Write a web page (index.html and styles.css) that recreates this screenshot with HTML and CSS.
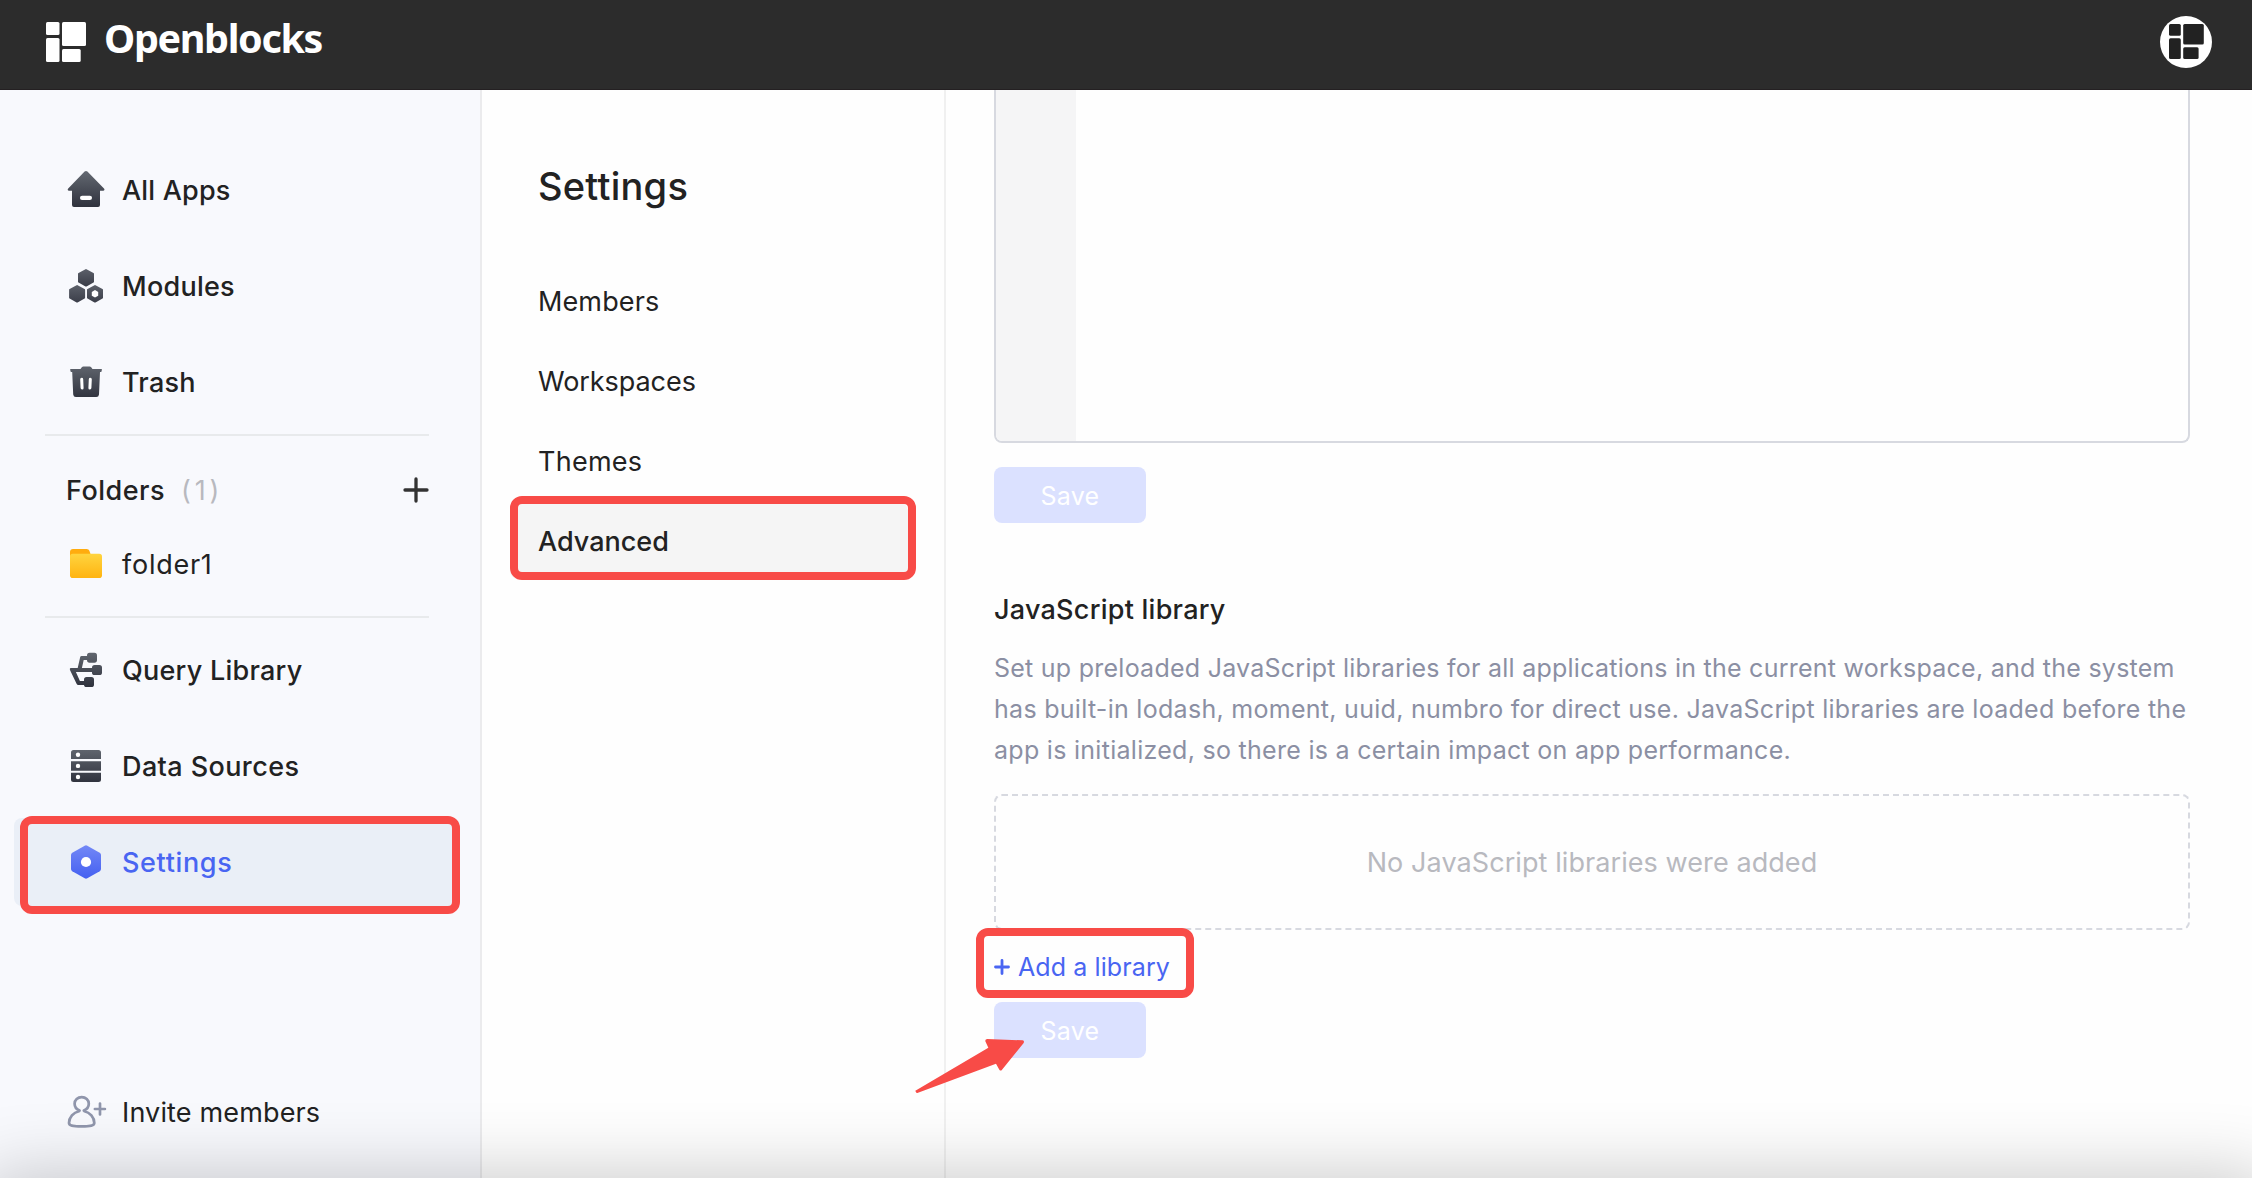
FILE: index.html
```
<!DOCTYPE html>
<html lang="en">
<head>
<meta charset="utf-8">
<title>Openblocks</title>
<link rel="stylesheet" href="styles.css">
</head>
<body>
<svg class="defs" width="0" height="0" aria-hidden="true">
  <defs>
    <linearGradient id="ink" gradientUnits="userSpaceOnUse" x1="0" y1="2" x2="0" y2="37"><stop offset="0" stop-color="#626770"/><stop offset="1" stop-color="#2f323d"/></linearGradient>
    <linearGradient id="inkTop" gradientUnits="userSpaceOnUse" x1="0" y1="3" x2="0" y2="20"><stop offset="0" stop-color="#5c606a"/><stop offset="1" stop-color="#3a3d48"/></linearGradient>
    <linearGradient id="inkLow" gradientUnits="userSpaceOnUse" x1="0" y1="19" x2="0" y2="37"><stop offset="0" stop-color="#5c606a"/><stop offset="1" stop-color="#3a3d48"/></linearGradient>
    <linearGradient id="blue" x1="0" y1="0" x2="0" y2="1"><stop offset="0" stop-color="#7388f6"/><stop offset="1" stop-color="#4460f1"/></linearGradient>
    <linearGradient id="gold" x1="0" y1="0" x2="0" y2="1"><stop offset="0" stop-color="#ffd43f"/><stop offset="1" stop-color="#ffb411"/></linearGradient>
  </defs>
</svg>

<header class="topbar">
  <div class="brand">
    <svg class="brand-mark" viewBox="0 0 40 40" fill="#fff"><rect width="13.5" height="13" rx="1.5"/><rect x="16" width="24" height="24" rx="1.5"/><rect y="16" width="13.5" height="24" rx="1.5"/><rect x="16" y="27" width="18.7" height="13" rx="1.5"/></svg>
    <span class="brand-name">Openblocks</span>
  </div>
  <div class="avatar">
    <svg width="35" height="35" viewBox="0 0 35 35" fill="#222"><rect width="11.8" height="11.8" rx="1.5"/><rect x="14.2" width="20.6" height="20.6" rx="1.5"/><rect y="14.2" width="11.8" height="20.8" rx="1.5"/><rect x="14.2" y="23.2" width="15.4" height="11.8" rx="1.5"/></svg>
  </div>
</header>

<div class="layout">
  <aside class="sidebar">
    <nav class="nav">
      <a class="nav-item apps"><svg class="icon" viewBox="0 0 40 40"><path fill="url(#ink)" d="M18.6 1.6a2 2 0 0 1 2.8 0L38 18.4c.9 1 .5 2.3-.8 2.3H34V35a2 2 0 0 1-2 2H8a2 2 0 0 1-2-2V20.7H3c-1.300 0-1.700-1.300-.8-2.300z"/><rect x="14" y="25.700" width="12" height="4.300" rx="2.100" fill="#fff"/></svg><span>All Apps</span></a>
      <a class="nav-item"><svg class="icon" viewBox="0 0 40 40"><g stroke-width="2" stroke-linejoin="round"><path fill="url(#inkTop)" stroke="url(#inkTop)" d="M20 4l7 3.900v7.800l-7 3.900-7-3.900V7.900z"/><path fill="url(#inkLow)" stroke="url(#inkLow)" d="M11.100 20l7 3.900v7.800l-7 3.900-7-3.900v-7.800zM29 20l7 3.900v7.800l-7 3.900-7-3.900v-7.800z"/></g><path fill="#fff" d="M29 24l3.200 1.900v3.800L29 31.600l-3.200-1.900v-3.800z"/></svg><span>Modules</span></a>
      <a class="nav-item"><svg class="icon" viewBox="0 0 40 40"><path fill="url(#ink)" d="M4.600 7H14.500l1.300-1.700q.6-.7 1.500-.7h6.400q.9 0 1.500.7L26.500 7h8.900q.7 0 .5.800l-.4 1.600q-.2.600-1 .600h-.5L33 32.500Q32.700 35 30.300 35H9.900Q7.500 35 7.200 32.500L6.200 10H5.600q-.8 0-1-.600L4.200 7.800Q4 7 4.600 7z"/><path stroke="#fff" stroke-width="3" stroke-linecap="round" d="M15.700 17.200l.4 8.800M24.300 17.200l-.4 8.800"/></svg><span>Trash</span></a>
    </nav>
    <hr class="divider">
    <div class="folders-head"><span class="folders-title">Folders</span><span class="folders-count">(1)</span>
      <svg class="plus" width="26" height="26" viewBox="0 0 26 26"><path d="M13 2v22M2 13h22" stroke="#333" stroke-width="3.300" stroke-linecap="round"/></svg>
    </div>
    <a class="folder"><svg class="icon" viewBox="0 0 40 40"><path fill="#ffac0f" d="M4 8a3 3 0 0 1 3-3h13.500c1.500 0 2.500.7 3 2l1.500 4.500V16H4z"/><rect x="4" y="9.700" width="32" height="24.300" rx="2.800" fill="url(#gold)"/></svg><span>folder1</span></a>
    <hr class="divider">
    <nav class="nav nav-lower">
      <a class="nav-item"><svg class="icon" viewBox="0 0 40 40"><g fill="url(#ink)"><rect x="21" y="2.700" width="10" height="10" rx="2.600"/><rect x="26" y="15" width="10" height="10" rx="2.600"/><rect x="18" y="27" width="10" height="10" rx="2.600"/><path d="M4.800 18H11.700L14.200 6.900Q14.500 6 15.500 6H22V10H17.700L15.900 18H27V22H9.900L13.900 31H19V35H12.300Q11.200 35 10.700 34L4.200 20.500Q3.200 18 4.800 18z"/></g></svg><span>Query Library</span></a>
      <a class="nav-item data"><svg class="icon" viewBox="0 0 40 40"><path fill="url(#ink)" d="M7.500 4h25A2.500 2.500 0 0 1 35 6.500V13H5V6.500A2.500 2.500 0 0 1 7.500 4zM5 15.300h30v9.400H5zM5 26.800h30v6.700a2.500 2.500 0 0 1-2.500 2.500h-25A2.500 2.500 0 0 1 5 33.500z"/><g fill="#fff"><circle cx="12" cy="8.700" r="2.200"/><circle cx="12" cy="19.900" r="2.200"/><circle cx="12" cy="31" r="2.200"/></g></svg><span>Data Sources</span></a>
      <a class="nav-item active"><svg class="icon" viewBox="0 0 40 40"><path fill="url(#blue)" d="M18.700 3.700q1.300-.7 2.600 0l12.400 7q1.300.8 1.300 2.300v14q0 1.500-1.300 2.300l-12.400 7q-1.300.7-2.600 0l-12.400-7Q5 28.500 5 27V13q0-1.500 1.300-2.300z"/><circle cx="20" cy="20" r="5.100" fill="#fff"/></svg><span>Settings</span></a>
    </nav>
    <a class="invite"><svg class="icon" viewBox="0 0 40 40" fill="none" stroke="#9096ac" stroke-width="2.700" stroke-linecap="round"><path d="M13.600 18.600C10.500 17.400 8.600 14.800 8.600 11.800 8.600 8 11.700 5.200 15.700 5.200s7.100 2.800 7.100 6.600c0 3-1.900 5.600-5 6.800M13 19.200C7.500 20.300 3 25.500 3 31c0 2.500 3.500 3.400 12.600 3.400S28.300 33.500 28.300 31c0-5.500-4.500-10.700-9.900-11.800M34 11.600v10.800M28.900 17h10"/></svg><span>Invite members</span></a>
  </aside>

  <section class="settings">
    <h1>Settings</h1>
    <nav class="settings-nav">
      <a class="members">Members</a>
      <a class="workspaces">Workspaces</a>
      <a class="themes">Themes</a>
      <a class="current">Advanced</a>
    </nav>
  </section>

  <main class="content">
    <div class="code-editor"><div class="gutter"></div></div>
    <button class="save" type="button">Save</button>
    <h2>JavaScript library</h2>
    <p class="desc"><span>Set up preloaded JavaScript libraries for all applications in the current workspace, and the system</span><br><span class="desc-wide">has built-in lodash, moment, uuid, numbro for direct use. JavaScript libraries are loaded before the</span><br><span class="desc-wide">app is initialized, so there is a certain impact on app performance.</span></p>
    <div class="empty">No JavaScript libraries were added</div>
    <a class="add"><svg width="16" height="16" viewBox="0 0 16 16"><path d="M8 1.500v13M1.500 8h13" stroke="#4965f2" stroke-width="2.800" stroke-linecap="round"/></svg><span>Add a library</span></a>
    <button class="save save-library" type="button">Save</button>
  </main>
</div>

<div class="mark mark-sidebar"></div>
<div class="mark mark-advanced"></div>
<div class="mark mark-add"></div>
<svg class="arrow" viewBox="0 0 450 270"><path fill="#f84b47" d="M46 212L265 83 256 64Q255 57 262 57L368 61Q374 63 371 69L306 149Q302 154 298 149L288 131 52 219Q48 220 46 212z"/></svg>
<div class="window-shadow"></div>
</body>
</html>
```
FILE: styles.css
```
* { box-sizing: border-box; }

body {
  margin: 0;
  height: 1178px;
  overflow: hidden;
  position: relative;
  display: flex;
  flex-direction: column;
  background: #fefefe;
  color: #222;
  font: 27px/40px Inter, "Liberation Sans", sans-serif;
  letter-spacing: 0.25px;
}

.defs { position: absolute; }

.topbar {
  flex: none;
  height: 90px;
  padding: 0 40px 6px 46px;
  display: flex;
  align-items: center;
  justify-content: space-between;
  background: #2c2c2c;
  border-bottom: 1px solid #242022;
}

.brand { display: flex; align-items: center; gap: 18px; }
.brand-mark { width: 40px; height: 40px; }
.brand-name {
  margin-top: -7px;
  color: #fff;
  font: 700 39.5px/40px "Noto Sans", sans-serif;
  letter-spacing: -1.35px;
}

.avatar {
  width: 52px;
  height: 52px;
  display: grid;
  place-items: center;
  border-radius: 50%;
  background: #fff;
}

.layout { flex: 1; display: flex; min-height: 0; }

.sidebar {
  width: 482px;
  display: flex;
  flex-direction: column;
  padding: 56px 20px 0 14px;
  background: #f8f9fd;
  border-right: 2px solid #ebebed;
}

.nav { display: flex; flex-direction: column; gap: 8px; }
.nav-lower { margin-top: 8px; }

.nav-item, .folder, .invite {
  height: 88px;
  display: flex;
  align-items: center;
  gap: 16px;
  padding-left: 52px;
  border-radius: 8px;
  font-weight: 500;
}
.icon { flex: none; width: 40px; height: 40px; overflow: visible; }
.sidebar span { padding-top: 2px; }

.apps { letter-spacing: 0.2px; }
.data { letter-spacing: 0.4px; }
.active { background: #eaeff7; color: #4965f2; letter-spacing: 0.65px; }

.folder { height: 76px; font-weight: 400; letter-spacing: 0.75px; }
.invite { margin-top: 162px; font-weight: 400; letter-spacing: 0.15px; }

.divider {
  width: 384px;
  height: 2px;
  margin: 8px 0 0 31px;
  border: 0;
  background: #e8eaec;
}
.folder + .divider { margin-top: 14px; }

.folders-head {
  height: 72px;
  margin-top: 18px;
  padding: 0 31px 0 52px;
  display: flex;
  align-items: center;
}
.folders-title { font-weight: 500; letter-spacing: 0.5px; }
.folders-count { margin-left: 16px; color: #b8b9bf; letter-spacing: 3.8px; }
.plus { margin-left: auto; }

.settings {
  width: 464px;
  padding: 72px 36px 0 28px;
  border-right: 2px solid #f0f0f0;
}
.settings h1 {
  margin: 0 0 67px 28px;
  font-size: 38px;
  line-height: 48px;
  font-weight: 500;
}
.settings-nav { display: flex; flex-direction: column; gap: 4px; margin-top: -14px; }
.settings-nav a { height: 76px; padding-left: 28px; line-height: 78px; border-radius: 8px; }
.members { letter-spacing: 0.12px; }
.workspaces { letter-spacing: -0.06px; }
.settings-nav .current { background: #f5f5f5; font-weight: 500; letter-spacing: 0; }

.content { width: 1244px; padding-left: 48px; }

.code-editor {
  height: 353px;
  border: 2px solid #d7d9e0;
  border-top: 0;
  border-radius: 0 0 8px 8px;
  overflow: hidden;
}
.gutter { width: 80px; height: 100%; background: #f5f5f6; }

.save {
  display: block;
  width: 152px;
  height: 56px;
  margin: 24px 0 0;
  padding: 2px 0 0;
  border: 0;
  border-radius: 8px;
  background: #dbe1ff;
  color: #fff;
  font: 400 25px/54px Inter, sans-serif;
  letter-spacing: 0.24px;
}

.content h2 { margin: 67px 0 0; font-size: 27px; line-height: 40px; font-weight: 500; }

.desc {
  margin: 18px 0 0;
  color: #8b8fa3;
  font-size: 25px;
  line-height: 41px;
  letter-spacing: 0.25px;
  white-space: nowrap;
}
.desc-wide { letter-spacing: 0.285px; }

.empty {
  height: 136px;
  margin-top: 23px;
  padding-top: 2px;
  display: grid;
  place-items: center;
  border: 2px dashed #d7d9e0;
  border-radius: 8px;
  color: #b8b9bf;
  letter-spacing: 0.08px;
}

.add {
  height: 36px;
  margin-top: 19px;
  display: flex;
  align-items: center;
  gap: 8px;
  color: #4965f2;
  font-size: 25px;
  letter-spacing: 0.1px;
}
.save-library { margin-top: 17px; }

/* Annotations drawn over the page */
.mark { position: absolute; border: 8px solid #f84b47; border-radius: 12px; }
.mark-sidebar { left: 20px; top: 816px; width: 440px; height: 98px; }
.mark-advanced { left: 510px; top: 496px; width: 406px; height: 84px; }
.mark-add { left: 976px; top: 928px; width: 218px; height: 70px; }
.arrow { position: absolute; left: 900px; top: 1020px; width: 150px; height: 90px; }

/* Soft shade rising from the bottom edge */
.window-shadow {
  position: absolute;
  left: 0;
  right: 0;
  bottom: 0;
  height: 78px;
  overflow: hidden;
  pointer-events: none;
}
.window-shadow::after {
  content: "";
  display: block;
  height: 78px;
  margin: 78px -20px 0 -15px;
  box-shadow: 0 0 75px rgba(0, 0, 0, 0.23);
}
```
